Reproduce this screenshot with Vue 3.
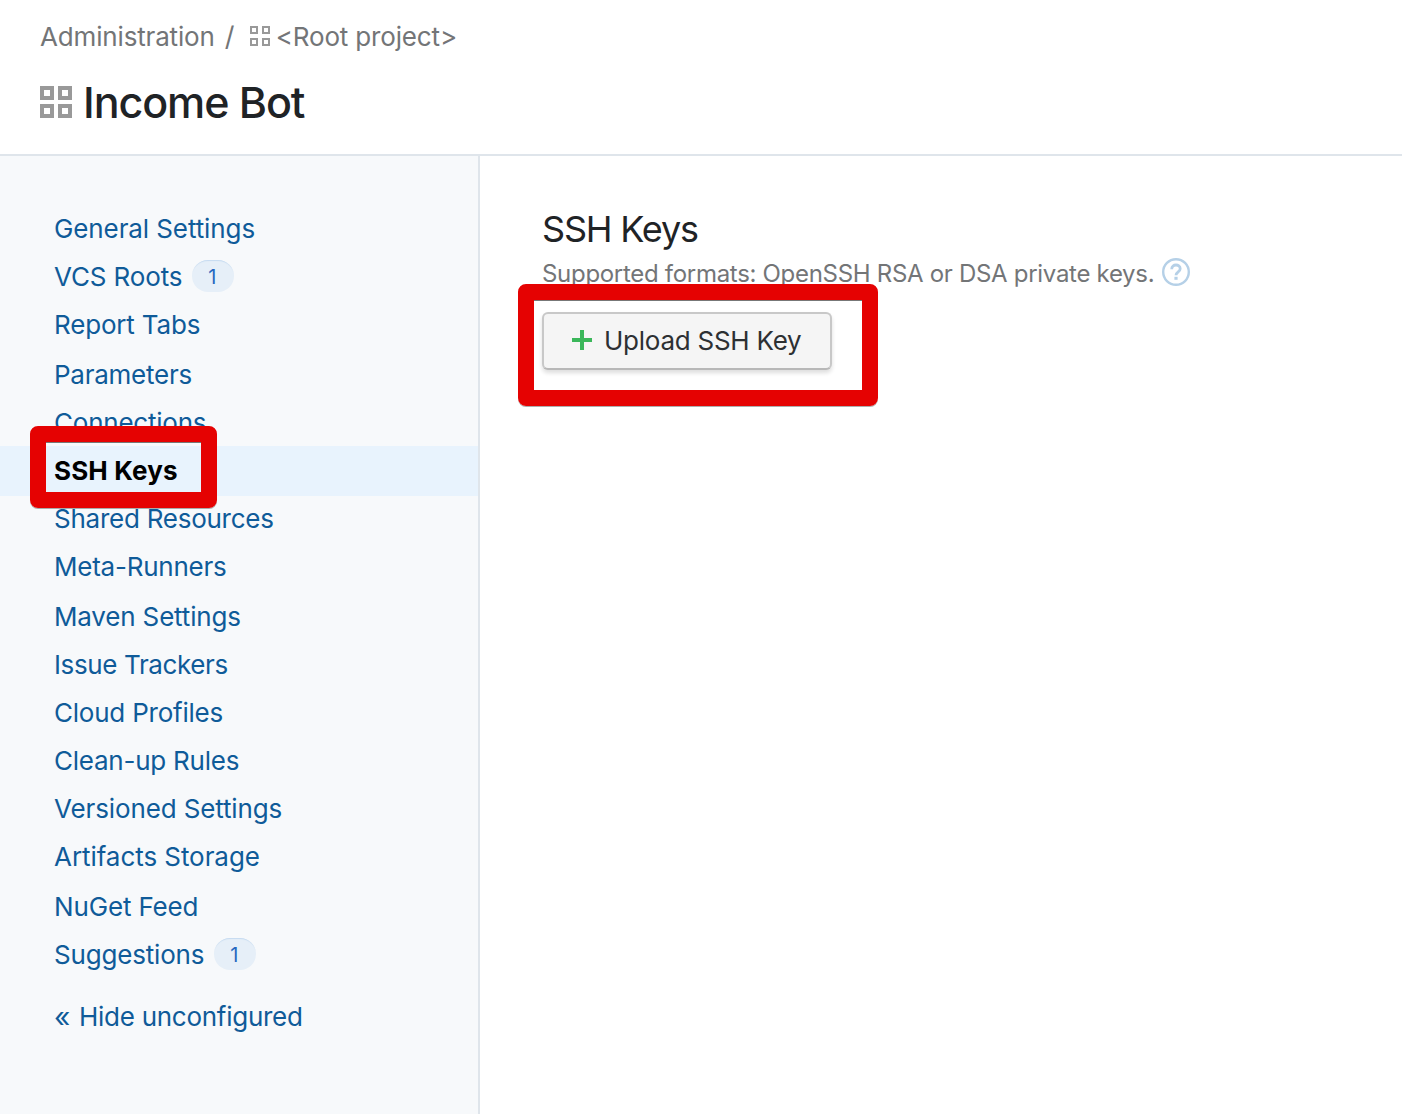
<script setup>
const items = [
  { name: 'General Settings', ls: -0.1 },
  { name: 'VCS Roots', ls: -0.13, count: 1 },
  { name: 'Report Tabs', ls: -0.17 },
  { name: 'Parameters', ls: -0.25, gap: true },
  { name: 'Connections', ls: -0.22 },
  { name: 'SSH Keys', ls: 0.16, active: true },
  { name: 'Shared Resources', ls: -0.25 },
  { name: 'Meta-Runners', ls: -0.24 },
  { name: 'Maven Settings', ls: -0.17, gap: true },
  { name: 'Issue Trackers', ls: -0.38 },
  { name: 'Cloud Profiles', ls: -0.22 },
  { name: 'Clean-up Rules', ls: -0.24 },
  { name: 'Versioned Settings', ls: -0.13 },
  { name: 'Artifacts Storage', ls: -0.06 },
  { name: 'NuGet Feed', ls: -0.15, gap: true },
  { name: 'Suggestions', ls: -0.18, count: 1 },
]
</script>

<template>
  <div class="page">
    <header>
      <nav class="crumbs">
        <span>Administration</span><span class="slash">/</span>
        <svg class="small-grid" width="22" height="22" viewBox="0 0 22 22" fill="none" stroke="#999" stroke-width="2"><path d="M2 2h6v6H2zM14 2h6v6h-6zM2 14h6v6H2zM14 14h6v6h-6z" /></svg>
        <span>&lt;Root project&gt;</span>
      </nav>
      <div class="title">
        <svg width="32" height="32" viewBox="0 0 32 32" fill="none" stroke="#999" stroke-width="4"><path d="M2 2h10v10H2zM20 2h10v10H20zM2 20h10v10H2zM20 20h10v10H20z" /></svg>
        <h1>Income Bot</h1>
      </div>
    </header>
    <div class="body">
      <aside>
        <a v-for="i in items" :key="i.name" class="item" :class="{ active: i.active, gap: i.gap }">
          <span :style="{ letterSpacing: i.ls + 'px' }">{{ i.name }}</span><span v-if="i.count" class="badge">{{ i.count }}</span>
        </a>
        <a class="item hide"><span class="arrow">«</span><span>Hide unconfigured</span></a>
        <div class="mark mark-nav"></div>
      </aside>
      <main>
        <h2>SSH Keys</h2>
        <p>
          <span>Supported formats: OpenSSH RSA or DSA private keys.</span>
          <svg width="28" height="28" viewBox="0 0 28 28" fill="none" stroke="#b5d0e7"><circle cx="14" cy="14" r="12.8" stroke-width="2.4" /><path d="M9.7 11.2C9.7 5.6 18.2 5.8 18.2 10.7c0 3.1-4.2 3.1-4.2 6.5" stroke-width="2.8" /><path d="M14 18.8v3" stroke-width="3.2" /></svg>
        </p>
        <button>
          <svg width="20" height="20" viewBox="0 0 20 20" stroke="#3bb75a" stroke-width="4"><path d="M10 0v20M0 10h20" /></svg>
          <span>Upload SSH Key</span>
        </button>
        <div class="mark mark-button"></div>
      </main>
    </div>
  </div>
</template>

<style>
body { margin: 0; }
</style>

<style scoped>
.page { width: 1402px; height: 1114px; overflow: hidden; background: #fff; color: #1f2326; font: 26px/32px Inter, "Liberation Sans", sans-serif; display: flex; flex-direction: column; }
header { height: 154px; box-sizing: content-box; border-bottom: 2px solid #dfe5eb; flex: none; }
.crumbs { height: 32px; padding: 21px 0 0 40px; display: flex; align-items: center; color: #737577; white-space: nowrap; letter-spacing: -0.16px; }
.slash { width: 10px; margin-left: 10px; font-size: 27px; }
.small-grid { flex: none; margin: 0 5px 2px 14px; }
.title { display: flex; align-items: center; height: 50px; padding: 24px 0 0 40px; }
h1 { margin: 0 0 0 11px; font-size: 43px; line-height: 50px; font-weight: 540; letter-spacing: -1.08px; white-space: nowrap; }
.body { display: flex; flex: 1; }
aside { position: relative; box-sizing: border-box; width: 480px; padding-top: 49px; border-right: 2px solid #dfe5eb; background: #f7f9fb; }
.item { box-sizing: border-box; display: flex; align-items: center; height: 48px; padding-left: 54px; color: #0f5b99; white-space: nowrap; }
.gap { margin-top: 2px; }
.active { height: 50px; margin: -1px 0; background: #e8f3fd; color: #000; font-weight: 700; }
.badge { width: 42px; height: 32px; margin: 0 0 2px 10px; border-radius: 16px; background: #e6eff8; box-shadow: inset 0 2px 1px -1px #c5daf0; color: #2568c0; text-align: center; text-indent: -2px; font-size: 20px; line-height: 34px; }
.hide { margin-top: 14px; letter-spacing: -0.27px; }
.arrow { width: 16px; margin-right: 9px; font-size: 28px; }
main { position: relative; flex: 1; padding: 49px 0 0 62px; }
h2 { margin: 0; font-size: 36px; line-height: 48px; font-weight: 400; letter-spacing: -1.2px; }
p { display: flex; align-items: center; gap: 8px; height: 32px; margin: 3px 0 0; color: #737577; font-size: 24px; letter-spacing: -0.3px; white-space: nowrap; }
p span { padding-top: 3px; }
button { display: flex; align-items: center; box-sizing: border-box; width: 290px; height: 58px; margin: 24px 0 0; padding: 0 0 0 28px; gap: 12px; border: 2px solid #c8c8c8; border-bottom-color: #b8b8b8; border-radius: 6px; background: #f5f5f5; box-shadow: 0 3px 4px #0002; color: #2d3033; font: inherit; letter-spacing: -0.25px; white-space: nowrap; }
button svg { margin-bottom: 2px; }
.mark { position: absolute; box-sizing: border-box; border: 16px solid #e50202; border-radius: 8px; box-shadow: 0 1px 0 #7779, inset 0 1px 0 #777; }
.mark-nav { left: 30px; top: 270px; width: 187px; height: 82px; }
.mark-button { left: 38px; top: 128px; width: 360px; height: 122px; }
</style>
